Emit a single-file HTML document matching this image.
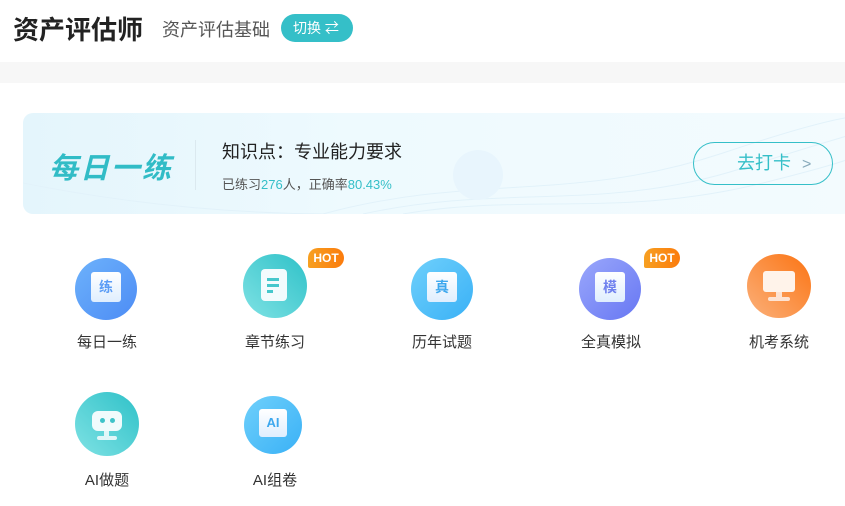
<!DOCTYPE html>
<html><head><meta charset="utf-8"><style>
*{margin:0;padding:0;box-sizing:border-box}
body{width:845px;height:506px;background:#fff;font-family:"Liberation Sans","Noto Sans CJK SC",sans-serif;position:relative;overflow:hidden;color:#333}
.abs{position:absolute}
.t1{left:13px;top:10px;font-size:26px;font-weight:bold;color:#222;letter-spacing:0px}
.t2{left:162px;top:16px;font-size:18px;color:#555}
.sw{left:281px;top:14px;width:72px;height:28px;border-radius:14px;background:#35bfc8;color:#fff;font-size:14px;line-height:28px;padding-left:12px}
.band{left:0;top:62px;width:845px;height:21px;background:#f7f7f7}
.ban{left:23px;top:113px;width:830px;height:101px;border-radius:10px;background:linear-gradient(90deg,#e4f5fc 0%,#eefafe 40%,#f3fbfe 100%);overflow:hidden}
.ico{width:62px;height:62px;border-radius:50%}
.lab{font-size:15px;color:#333;width:120px;text-align:center}
.hot{width:36px;height:20px;border-radius:10px 10px 10px 2px;background:linear-gradient(90deg,#f7a021,#fb7b0c);color:#fff;font-size:12px;font-weight:bold;text-align:center;line-height:20px}
.doc{background:linear-gradient(#fff,#dfeefe);border-radius:3px;font-weight:bold;font-size:14px;text-align:center}
</style></head><body>
<div class="abs t1">资产评估师</div>
<div class="abs t2">资产评估基础</div>
<div class="abs sw">切换 ⇄</div>
<div class="abs band"></div>
<div class="abs ban">
<svg class="abs" style="left:0;top:0" width="830" height="101"><g fill="none" stroke="#e2f2fa" stroke-width="1"><path d="M300 101 C450 60 550 90 700 40 S830 10 830 0"/><path d="M340 101 C480 70 580 100 720 55 S830 25 830 15"/><path d="M380 101 C500 80 600 105 740 70 S830 40 830 30"/><path d="M0 70 C100 90 200 100 300 101"/></g><circle cx="455" cy="62" r="25" fill="#e8f5fd"/></svg>
<div class="abs" style="left:26px;top:32px;font-size:29px;font-weight:bold;font-style:italic;color:#31bcc6;letter-spacing:2px">每日一练</div>
<div class="abs" style="left:172px;top:27px;width:1px;height:50px;background:#dbe9ef"></div>
<div class="abs" style="left:199px;top:25px;font-size:18px;color:#222">知识点：专业能力要求</div>
<div class="abs" style="left:199px;top:61px;font-size:13px;color:#555">已练习<span style="color:#35bfc8">276</span>人，正确率<span style="color:#35bfc8">80.43%</span></div>
<div class="abs" style="left:670px;top:29px;width:140px;height:43px;border:1px solid #35bfc8;border-radius:22px;color:#35bfc8;font-size:18px;line-height:41px;padding-left:43px">去打卡 <span style="font-size:16px;margin-left:6px;color:#8ab">&gt;</span></div>
</div>

<div class="abs ico" style="left:75px;top:258px;background:linear-gradient(135deg,#6db2fb,#4d8cf5)"><div class="abs doc" style="left:16px;top:14px;width:30px;height:30px;color:#5a9cf6;line-height:30px">练</div></div>
<div class="abs lab" style="left:47px;top:331px">每日一练</div>

<div class="abs ico" style="left:243px;top:254px;width:64px;height:64px;background:linear-gradient(225deg,#2fc1c8,#7fe2e4)"><div class="abs" style="left:18px;top:15px;width:26px;height:32px;background:#f2fbfd;border-radius:4px"><div style="margin:9px 0 0 6px;width:12px;height:3px;background:#45c7cc;box-shadow:0 6px 0 #45c7cc"></div><div style="margin:9px 0 0 6px;width:6px;height:3px;background:#45c7cc"></div></div></div>
<div class="abs lab" style="left:215px;top:331px">章节练习</div>
<div class="abs hot" style="left:308px;top:248px">HOT</div>

<div class="abs ico" style="left:411px;top:258px;background:linear-gradient(135deg,#6fd0fb,#3ab1f6)"><div class="abs doc" style="left:16px;top:14px;width:30px;height:30px;color:#3ea8ee;line-height:30px">真</div></div>
<div class="abs lab" style="left:382px;top:331px">历年试题</div>

<div class="abs ico" style="left:579px;top:258px;background:linear-gradient(135deg,#9aa7fb,#6777f3)"><div class="abs doc" style="left:16px;top:14px;width:30px;height:30px;color:#7081ee;line-height:30px">模</div></div>
<div class="abs lab" style="left:551px;top:331px">全真模拟</div>
<div class="abs hot" style="left:644px;top:248px">HOT</div>

<div class="abs ico" style="left:747px;top:254px;width:64px;height:64px;background:linear-gradient(225deg,#fb7413,#fbb07a)"><div class="abs" style="left:16px;top:17px;width:32px;height:21px;background:#fff3ea;border-radius:3px"></div><div class="abs" style="left:29px;top:38px;width:6px;height:6px;background:#fde3d3"></div><div class="abs" style="left:21px;top:43px;width:22px;height:4px;background:#fde3d3;border-radius:2px"></div></div>
<div class="abs lab" style="left:719px;top:331px">机考系统</div>

<div class="abs ico" style="left:75px;top:392px;width:64px;height:64px;background:linear-gradient(225deg,#2fc1c8,#7fe2e4)"><div class="abs" style="left:17px;top:19px;width:30px;height:20px;background:#f0fbfc;border-radius:6px"><div style="position:absolute;left:8px;top:7px;width:5px;height:5px;border-radius:50%;background:#3ec3c9;box-shadow:10px 0 0 #3ec3c9"></div></div><div class="abs" style="left:29px;top:39px;width:5px;height:6px;background:#e0f6f8"></div><div class="abs" style="left:22px;top:44px;width:20px;height:4px;background:#e0f6f8;border-radius:2px"></div></div>
<div class="abs lab" style="left:47px;top:469px">AI做题</div>

<div class="abs ico" style="left:244px;top:396px;width:58px;height:58px;background:linear-gradient(135deg,#6fd0fb,#3ab1f6)"><div class="abs doc" style="left:15px;top:13px;width:28px;height:28px;color:#3ea8ee;line-height:28px;font-size:13px">AI</div></div>
<div class="abs lab" style="left:215px;top:469px">AI组卷</div>
</body></html>
